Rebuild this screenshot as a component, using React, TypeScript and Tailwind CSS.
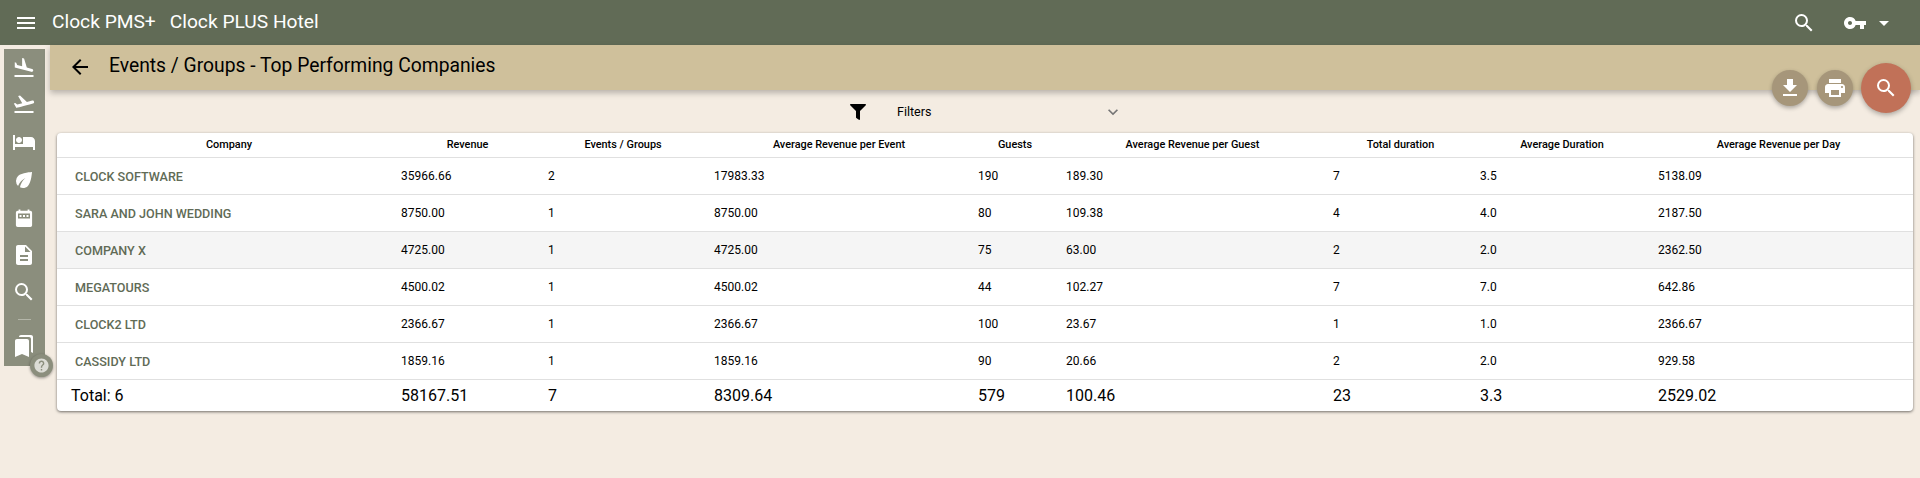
import React from "react";
import {
  MdMenu,
  MdSearch,
  MdVpnKey,
  MdArrowDropDown,
  MdArrowBack,
  MdFileDownload,
  MdPrint,
  MdFlightLand,
  MdFlightTakeoff,
  MdHotel,
  MdEco,
  MdDescription,
  MdBookmarks,
  MdHelp,
  MdExpandMore,
} from "react-icons/md";
import { FaFilter } from "react-icons/fa";

const gridCols =
  "grid grid-cols-[344px_147px_166px_264px_88px_267px_147px_178px_255px]";

const rows = [
  ["CLOCK SOFTWARE", "35966.66", "2", "17983.33", "190", "189.30", "7", "3.5", "5138.09"],
  ["SARA AND JOHN WEDDING", "8750.00", "1", "8750.00", "80", "109.38", "4", "4.0", "2187.50"],
  ["COMPANY X", "4725.00", "1", "4725.00", "75", "63.00", "2", "2.0", "2362.50"],
  ["MEGATOURS", "4500.02", "1", "4500.02", "44", "102.27", "7", "7.0", "642.86"],
  ["CLOCK2 LTD", "2366.67", "1", "2366.67", "100", "23.67", "1", "1.0", "2366.67"],
  ["CASSIDY LTD", "1859.16", "1", "1859.16", "90", "20.66", "2", "2.0", "929.58"],
];

const totals = ["58167.51", "7", "8309.64", "579", "100.46", "23", "3.3", "2529.02"];

// calendar with the dotted strip, the icon packages don't have this one
const CalendarIcon = () => (
  <svg viewBox="0 0 24 24" width="24" height="24" className="mt-[14px]">
    <path d="M6 2.5h2V4h8V2.5h2V4h1a2 2 0 0 1 2 2v14a2 2 0 0 1-2 2H5a2 2 0 0 1-2-2V6a2 2 0 0 1 2-2h1z" fill="#fff" transform="translate(1.2 1.2) scale(0.9)" />
    <rect x="6" y="7.5" width="12" height="5" fill="#8b8e7d" />
    <rect x="7.5" y="9" width="2" height="2" fill="#fff" />
    <rect x="11" y="9" width="2" height="2" fill="#fff" />
    <rect x="14.5" y="9" width="2" height="2" fill="#fff" />
  </svg>
);

const App = () => {
  return (
    <div className="min-h-screen bg-[#f4ece2] font-['Roboto',sans-serif] text-black">
      {/* Top bar */}
      <div className="flex h-[45px] items-center bg-[#616b56] text-white">
        <MdMenu className="ml-[14px] text-[24px]" />
        <span className="ml-[14px] text-[19.2px]">Clock PMS+</span>
        <span className="ml-[14px] text-[19.2px]">Clock PLUS Hotel</span>
        <MdSearch className="ml-auto text-[24px]" />
        <MdVpnKey className="ml-[27px] text-[24px]" />
        <MdArrowDropDown className="ml-[5px] mr-[24px] text-[24px]" />
      </div>

      <div className="flex items-start">
        {/* Side menu */}
        <div className="relative ml-1 mt-1 flex h-[317px] w-[41px] flex-col items-center bg-[#8b8e7d] pr-px pt-[7px] text-white">
          <MdFlightLand className="text-[24px]" />
          <MdFlightTakeoff className="mt-[12px] text-[24px]" />
          <MdHotel className="mt-[14px] text-[24px]" />
          <MdEco className="mt-[14px] text-[24px]" />
          <CalendarIcon />
          <MdDescription className="mt-[13px] text-[24px]" />
          <MdSearch className="mt-[13px] text-[24px]" />
          <div className="mt-[15px] h-px w-[13px] bg-[#b4b6a9]" />
          <MdBookmarks className="mt-[14px] text-[24px]" />
          <div className="absolute left-[26px] top-[305px] flex h-[23px] w-[23px] items-center justify-center rounded-full bg-[#8b8e7d] shadow-[0_1px_3px_rgba(0,0,0,0.4)]">
            <MdHelp className="text-[17px] text-[#dcdcd6]" />
          </div>
        </div>

        <div className="relative ml-[5px] flex-1">
          {/* Title */}
          <div className="flex h-[45px] items-center bg-[#cfc09b] pb-[2px] pl-[18px] shadow-[0_3px_6px_rgba(0,0,0,0.25)]">
            <MdArrowBack className="text-[24px]" />
            <span className="ml-[17px] text-[19.3px]">Events / Groups - Top Performing Companies</span>
          </div>

          {/* Floating actions */}
          <div className="absolute right-[9px] top-[18px] flex items-center">
            <div className="flex h-9 w-9 items-center justify-center rounded-full bg-[#a6967a] text-white shadow-[0_2px_4px_rgba(0,0,0,0.3)]">
              <MdFileDownload className="text-[24px]" />
            </div>
            <div className="ml-[9px] flex h-9 w-9 items-center justify-center rounded-full bg-[#a6967a] text-white shadow-[0_2px_4px_rgba(0,0,0,0.3)]">
              <MdPrint className="text-[24px]" />
            </div>
            <div className="ml-[8px] flex h-[50px] w-[50px] items-center justify-center rounded-full bg-[#c17158] text-white shadow-[0_2px_5px_rgba(0,0,0,0.3)]">
              <MdSearch className="text-[24px]" />
            </div>
          </div>

          {/* Filters */}
          <div className="flex h-[43px] items-center pl-[800px]">
            <FaFilter className="text-[16px]" />
            <span className="ml-[31px] w-[206px] pt-px text-[12.5px]">Filters</span>
            <MdExpandMore className="text-[20px] text-[#757575]" />
          </div>

          {/* Table */}
          <div className="mx-[7px] rounded-[4px] bg-white shadow-[0_1px_3px_rgba(0,0,0,0.55)]">
            <div className={`${gridCols} h-[25px] items-center border-b border-[#e0e0e0] text-center text-[10.9px] font-medium`}>
              <div>Company</div>
              <div className="pr-[14px]">Revenue</div>
              <div className="pr-[16px]">Events / Groups</div>
              <div className="pr-[14px]">Average Revenue per Event</div>
              <div className="pr-[14px]">Guests</div>
              <div className="pr-[14px]">Average Revenue per Guest</div>
              <div className="pr-[12px]">Total duration</div>
              <div className="pr-[14px]">Average Duration</div>
              <div className="pr-[14px]">Average Revenue per Day</div>
            </div>

            {rows.map((row, i) => (
              <div
                key={row[0]}
                className={`${gridCols} h-[37px] items-center border-b border-[#e0e0e0] text-[12px] ${i === 2 ? "bg-[#f5f5f5]" : ""}`}
              >
                <div className="pl-[18px] pt-[3px] text-[12.6px] font-medium text-[#616b56]">{row[0]}</div>
                {row.slice(1).map((val, j) => (
                  <div key={j}>{val}</div>
                ))}
              </div>
            ))}

            <div className={`${gridCols} h-[31px] items-center text-[16px]`}>
              <div className="pl-[14px]">Total: 6</div>
              {totals.map((val, j) => (
                <div key={j}>{val}</div>
              ))}
            </div>
          </div>
        </div>
      </div>
    </div>
  );
};

export default App;
